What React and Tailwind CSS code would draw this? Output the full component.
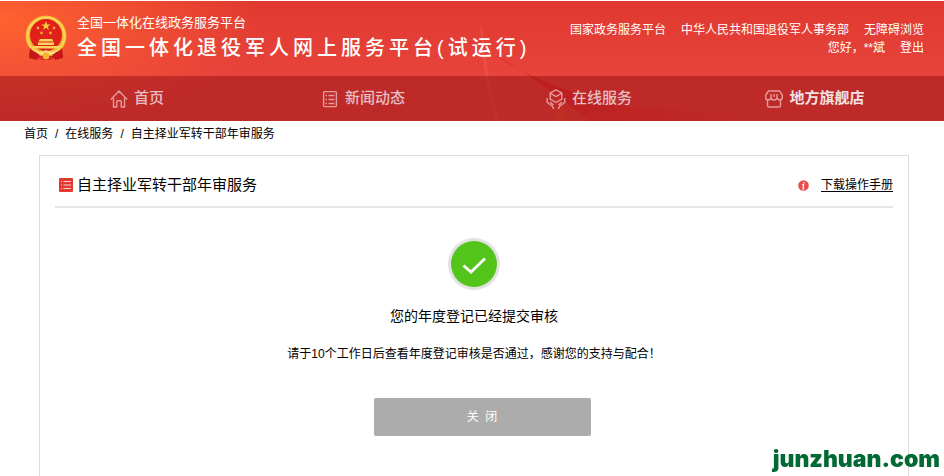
import React from "react";

const navItems = [
  { label: "首页", icon: HomeIcon },
  { label: "新闻动态", icon: NewsIcon },
  { label: "在线服务", icon: ServiceIcon },
  { label: "地方旗舰店", icon: StoreIcon, active: true },
];

const crumbs = ["首页", "在线服务", "自主择业军转干部年审服务"];

function HomeIcon() {
  return (
    <svg className="w-[18px] h-[18px]" viewBox="0 0 18 18" fill="none" stroke="currentColor" strokeWidth="1.4">
      <path d="M3.5 8v9h3.2v-5.5q0-.8.8-.8h3q.8 0 .8.8V17h3.2V8M.8 9.5 9 1l8.200 8.500" />
    </svg>
  );
}

function NewsIcon() {
  return (
    <svg className="w-[18px] h-[18px]" viewBox="0 0 18 18" fill="none" stroke="currentColor" strokeWidth="1.4">
      <rect x="2.600" y="1.600" width="12.800" height="15" rx="1" />
      <path d="M4.500 5.500h1.500M7.500 5.500h6M4.500 9.500h1.500M7.500 9.500h6M4.500 13.500h1.500M7.500 13.500h6" />
    </svg>
  );
}

function ServiceIcon() {
  return (
    <svg className="w-5 h-5" viewBox="0 0 20 20" fill="none" stroke="currentColor" strokeWidth="1.4">
      <path d="M10 .8 15.800 4v6.200L10 13.500l-5.800-3.300V4zM4.500 4.300 10 7.500l5.500-3.200" />
      <path d="M1.200 9v4.500l5 3.500 1.500 3M18.800 9v4.500l-5 3.500-1.500 3M4 13l3.500 3M16 13l-3.500 3" />
    </svg>
  );
}

function StoreIcon() {
  return (
    <svg className="w-[18px] h-[18px]" viewBox="0 0 18 18" fill="none" stroke="currentColor" strokeWidth="1.4">
      <path d="M3.500 1h11L17.300 5v2.500q0 2.500-2.600 2.500-2.200 0-2.700-2.500Q11.500 10 9 10T6 7.500Q5.500 10 3.300 10 .7 10 .7 7.500V5zM6 7.500V4M9 7V4M12 7.500V4" />
      <path d="M2.500 10v5.500q0 1.500 1.500 1.500h10q1.500 0 1.500-1.500V10" />
    </svg>
  );
}

const Emblem = () => (
  <svg className="w-[42px] h-[46px] shrink-0" viewBox="0 0 42 46">
    <path d="M6 29 4 43l9-1 4 3h8l4-3 9 1-2-14z" fill="#c8151b" />
    <circle cx="21" cy="21" r="20.500" fill="#f3b52e" />
    <circle cx="21" cy="21" r="18.500" fill="none" stroke="#fbd45c" strokeWidth="2" />
    <circle cx="21" cy="20" r="16" fill="#e0201b" />
    <path d="m21 6 1.200 3.400h3.500L22.900 11.500l1 3.400L21 12.800l-2.900 2.100 1-3.400-2.800-2.100h3.500z" fill="#f9c83c" />
    <g fill="#f0a832">
      <circle cx="13" cy="13" r="1.400" />
      <circle cx="29" cy="13" r="1.400" />
      <circle cx="16.500" cy="18" r="1.400" />
      <circle cx="25.500" cy="18" r="1.400" />
    </g>
    <path d="M15 24h12l1.500 2.500H13.500zM13 27.500h16V30H13zM8 31h26v2.500H8z" fill="#fbd45c" />
    <path d="M5 33q4 5 10 5l-3 7-8-2zM37 33q-4 5-10 5l3 7 8-2z" fill="#c8151b" />
    <path d="M10 35q6 4 11 0 5 4 11 0-3 6-8 4l-3-2-3 2q-5 2-8-4z" fill="#fbe08a" />
    <circle cx="21" cy="41" r="3.500" fill="#f3b52e" />
    <path d="M13 44q2-4 5-3v4zM29 44q-2-4-5-3v4z" fill="#d9302a" />
  </svg>
);

// red silk drawn behind the title bar and the menu
const Silk = () => (
  <svg className="absolute inset-0 w-full h-full" viewBox="0 0 944 120" preserveAspectRatio="none">
    <defs>
      <linearGradient id="silk" x1="0" y1="0" x2="1" y2="1">
        <stop offset="0" stopColor="#e01414" stopOpacity=".75" />
        <stop offset="1" stopColor="#e01414" stopOpacity="0" />
      </linearGradient>
    </defs>
    <path d="M496 54q40 30 130 52 60 2 110 14H590q-50-40-94-66z" fill="url(#silk)" />
    <path d="M482 26q4 50 18 94h-5Q483 76 480 26z" fill="#f0655a" opacity=".35" />
    <path d="M555 120q-1-10 6-19 6 10 6 19z" fill="#f05a28" opacity=".3" />
  </svg>
);

const Header = () => (
  <header className="relative text-white bg-[linear-gradient(to_bottom,#e0382f,#e7443c_75px)]">
    <div className="absolute inset-0 bg-[radial-gradient(ellipse_260px_100px_at_0_20px,#ff6230,transparent)]" />
    <Silk />
    <div className="relative flex items-start justify-between pl-[25px] pr-5 h-[75px]">
      <div className="flex gap-[10px] pt-[14px]">
        <Emblem />
        <div className="whitespace-nowrap">
          <p className="text-[13px] leading-4">全国一体化在线政务服务平台</p>
          <h1 className="text-xl leading-[34px] tracking-[4px] font-medium">
            全国一体化退役军人网上服务平台(试运行)
          </h1>
        </div>
      </div>
      <div className="flex flex-col items-end pt-5 text-xs leading-[18px] whitespace-nowrap">
        <div className="flex gap-[15px]">
          <a href="#">国家政务服务平台</a>
          <a href="#">中华人民共和国退役军人事务部</a>
          <a href="#">无障碍浏览</a>
        </div>
        <div className="flex gap-[15px]">
          <span>您好，**斌</span>
          <a href="#">登出</a>
        </div>
      </div>
    </div>
    <nav className="relative grid grid-cols-4 pl-6 pr-4 h-[45px] bg-[#960f14]/50">
      {navItems.map(({ label, icon: Icon, active }) => (
        <a
          key={label}
          href="#"
          className={
            active
              ? "flex items-center justify-center gap-[6px] text-[15px] font-bold text-[#f3e0e2]"
              : "flex items-center justify-center gap-[6px] text-[15px] font-medium text-[#e6bfc6]"
          }
        >
          <span className="text-[#e59a9c]">
            <Icon />
          </span>
          {label}
        </a>
      ))}
    </nav>
  </header>
);

const Breadcrumb = () => (
  <ol className="flex gap-[7px] px-6 pt-1 text-xs leading-[18px]">
    {crumbs.map((name, i) => (
      <li key={name} className="flex gap-[7px]">
        {i > 0 && <span>/</span>}
        <a href="#">{name}</a>
      </li>
    ))}
  </ol>
);

const App = () => {
  return (
    <div className="flex flex-col min-h-screen pt-px bg-white text-black font-['Liberation_Sans','Noto_Sans_CJK_SC',sans-serif]">
      <Header />
      <Breadcrumb />
      <main className="flex-1 mt-3 ml-[39px] mr-[35px] px-[15px] border border-b-0 border-[#dcdcdc]">
        <div className="flex items-center justify-between h-[52px] pt-2 border-b-2 border-[#e6e6e6]">
          <h2 className="flex items-center gap-1 pl-1 text-[15px]">
            <svg className="w-[14px] h-[14px]" viewBox="0 0 14 14">
              <rect width="14" height="14" rx="1" fill="#e23a30" />
              <path d="M2 3.500h1M4.500 3.500H12M2 7h1M4.500 7H12M2 10.500h1M4.500 10.500H12" stroke="#fbd3d0" strokeWidth="1.200" />
            </svg>
            自主择业军转干部年审服务
          </h2>
          <div className="flex items-center gap-3 text-xs">
            <svg className="w-[11px] h-[11px]" viewBox="0 0 11 11">
              <circle cx="5.500" cy="5.500" r="5.300" fill="#e84c4c" />
              <path d="M6.200 2 5.900 3.300M4.300 4.700h1.300L5 8.800h1.200" fill="none" stroke="#fff" strokeWidth="1.200" />
            </svg>
            <a href="#" className="underline underline-offset-2">
              下载操作手册
            </a>
          </div>
        </div>
        <section className="flex flex-col items-center pt-[30px]">
          <svg className="w-[52px] h-[52px]" viewBox="0 0 52 52">
            <circle cx="26" cy="26" r="26" fill="#e2e2e2" />
            <circle cx="26" cy="26" r="23" fill="#52c41a" />
            <path d="m15.500 27.500 7.500 6.500L37 20.500" fill="none" stroke="#fff" strokeWidth="2.800" />
          </svg>
          <p className="mt-4 text-sm">您的年度登记已经提交审核</p>
          <p className="mt-5 text-xs">
            请于10个工作日后查看年度登记审核是否通过，感谢您的支持与配合！
          </p>
          <div className="pt-9 pl-4">
            <button
              type="button"
              className="w-[217px] h-[38px] rounded-xs bg-[#acacac] text-xs text-white whitespace-pre"
            >
              关  闭
            </button>
          </div>
        </section>
      </main>
      <span className="fixed bottom-0 right-1 font-['Inter',sans-serif] font-black text-[23px] text-[#006934]">
        junzhuan.com
      </span>
    </div>
  );
};

export default App;
